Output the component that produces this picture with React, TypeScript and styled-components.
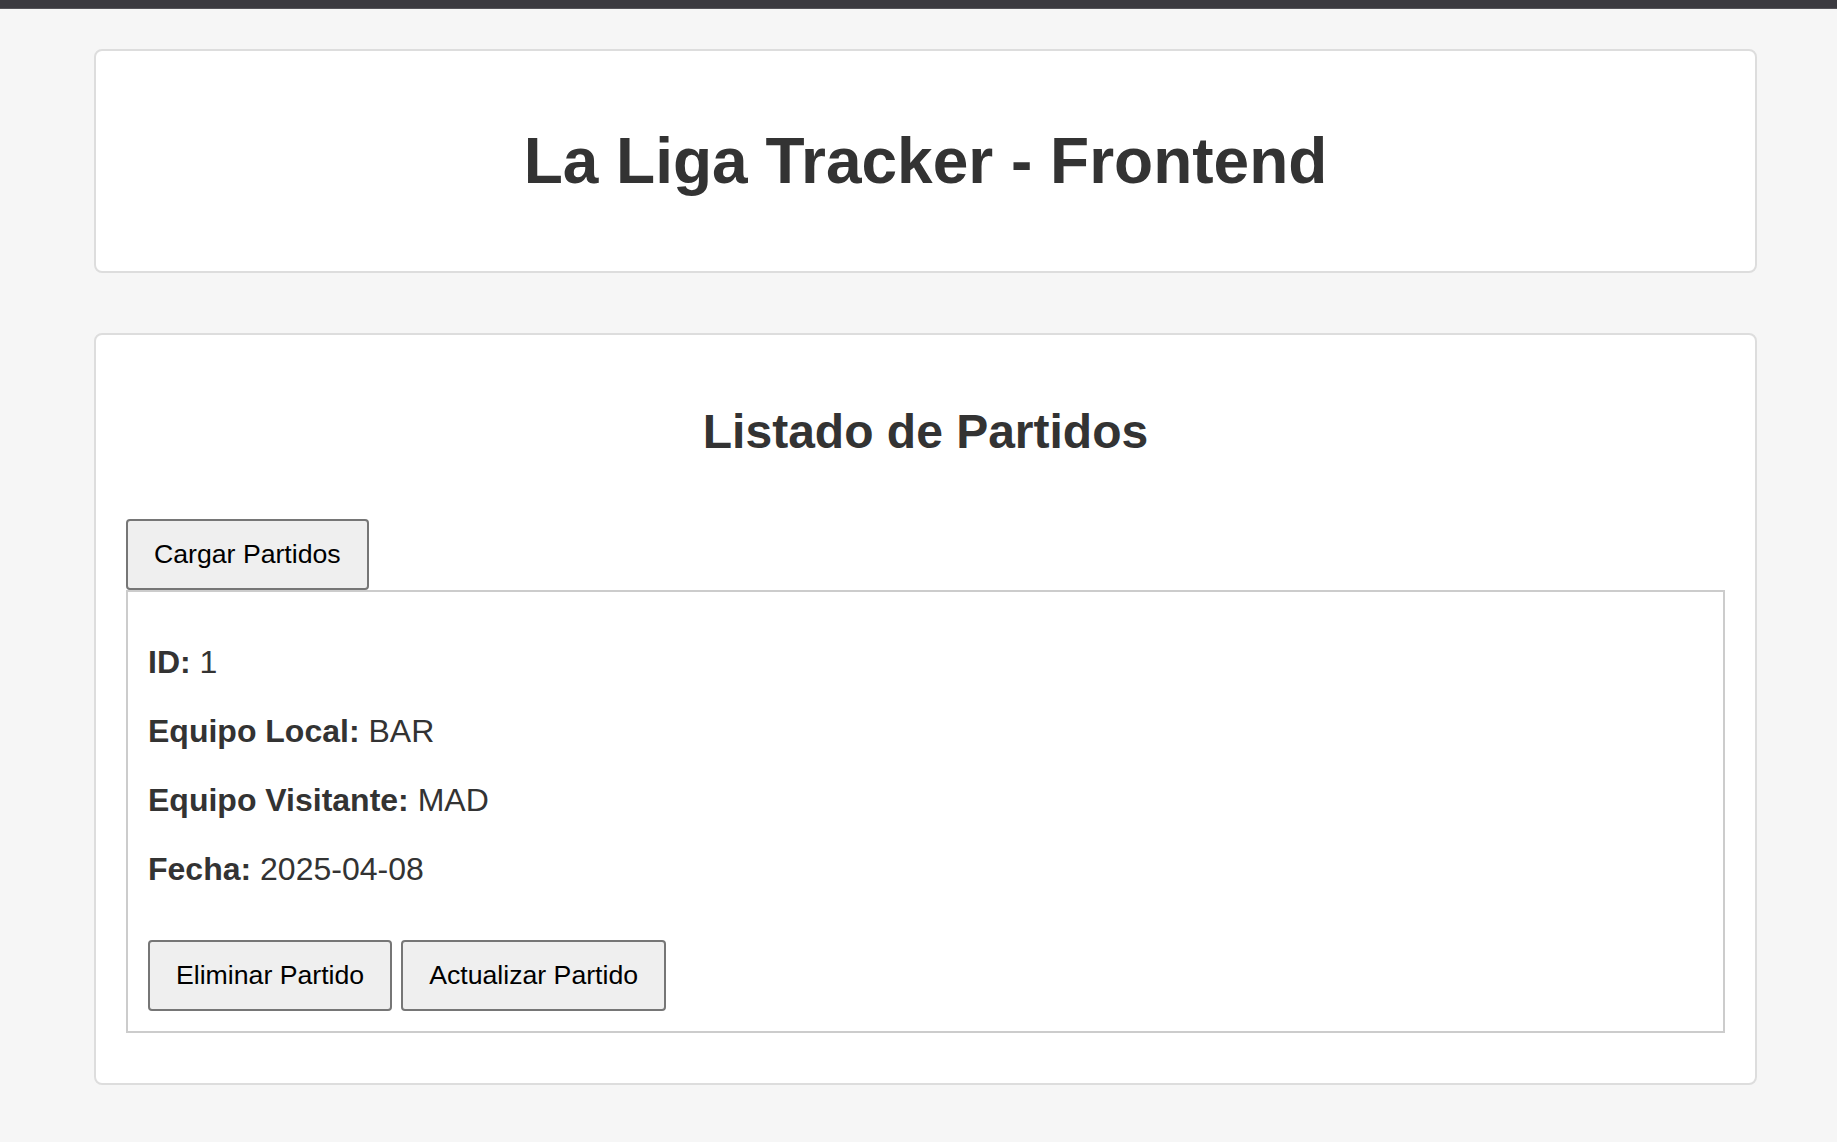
import React from "react";
import styled, { createGlobalStyle } from "styled-components";

const GlobalStyle = createGlobalStyle`
  html, body {
    margin: 0;
    padding: 0;
    background: #f6f6f6;
    font-family: "Liberation Sans", Arial, Helvetica, sans-serif;
    color: #333333;
  }
`;

const TopBar = styled.div`
  height: 8px;
  background: #3b3a40;
  border-bottom: 1px solid #55545a;
`;

const Page = styled.main`
  display: flex;
  flex-direction: column;
  gap: 60px;
  padding: 40px 80px 59px 94px;
`;

const Card = styled.section`
  background: #ffffff;
  border: 2px solid #dddddd;
  border-radius: 8px;
  padding: 30px;
`;

const Title = styled.h1`
  margin: 43px 0 43px;
  font-size: 64px;
  font-weight: 700;
  text-align: center;
  color: #333333;
  line-height: normal;
`;

const Subtitle = styled.h2`
  margin: 39px 0 60px;
  font-size: 48px;
  font-weight: 700;
  text-align: center;
  color: #333333;
  line-height: normal;
`;

const Toolbar = styled.div`
  display: flex;
`;

const Button = styled.button`
  font-family: "Liberation Sans", Arial, Helvetica, sans-serif;
  font-size: 26.67px;
  line-height: normal;
  color: #000000;
  background: #efefef;
  border: 2px solid #767676;
  border-radius: 4px;
  padding: 18px 26px;
  cursor: pointer;
`;

const MatchBox = styled.div`
  border: 2px solid #cccccc;
  padding: 20px;
  margin-bottom: 20px;
`;

const Fields = styled.div``;

const Field = styled.p`
  margin: 32px 0;
  font-size: 32px;
  line-height: normal;
  color: #333333;
`;

const Label = styled.strong`
  font-weight: 700;
`;

const ButtonRow = styled.div`
  display: flex;
  gap: 9px;
  margin-top: 52px;
`;

const partido = {
  id: 1,
  local: "BAR",
  visitante: "MAD",
  fecha: "2025-04-08",
};

export default function App() {
  return (
    <>
      <GlobalStyle />
      <TopBar />
      <Page>
        <Card>
          <Title>La Liga Tracker - Frontend</Title>
        </Card>
        <Card>
          <Subtitle>Listado de Partidos</Subtitle>
          <Toolbar>
            <Button>Cargar Partidos</Button>
          </Toolbar>
          <MatchBox>
            <Fields>
              <Field>
                <Label>ID:</Label> {partido.id}
              </Field>
              <Field>
                <Label>Equipo Local:</Label> {partido.local}
              </Field>
              <Field>
                <Label>Equipo Visitante:</Label> {partido.visitante}
              </Field>
              <Field>
                <Label>Fecha:</Label> {partido.fecha}
              </Field>
            </Fields>
            <ButtonRow>
              <Button>Eliminar Partido</Button>
              <Button>Actualizar Partido</Button>
            </ButtonRow>
          </MatchBox>
        </Card>
      </Page>
    </>
  );
}
